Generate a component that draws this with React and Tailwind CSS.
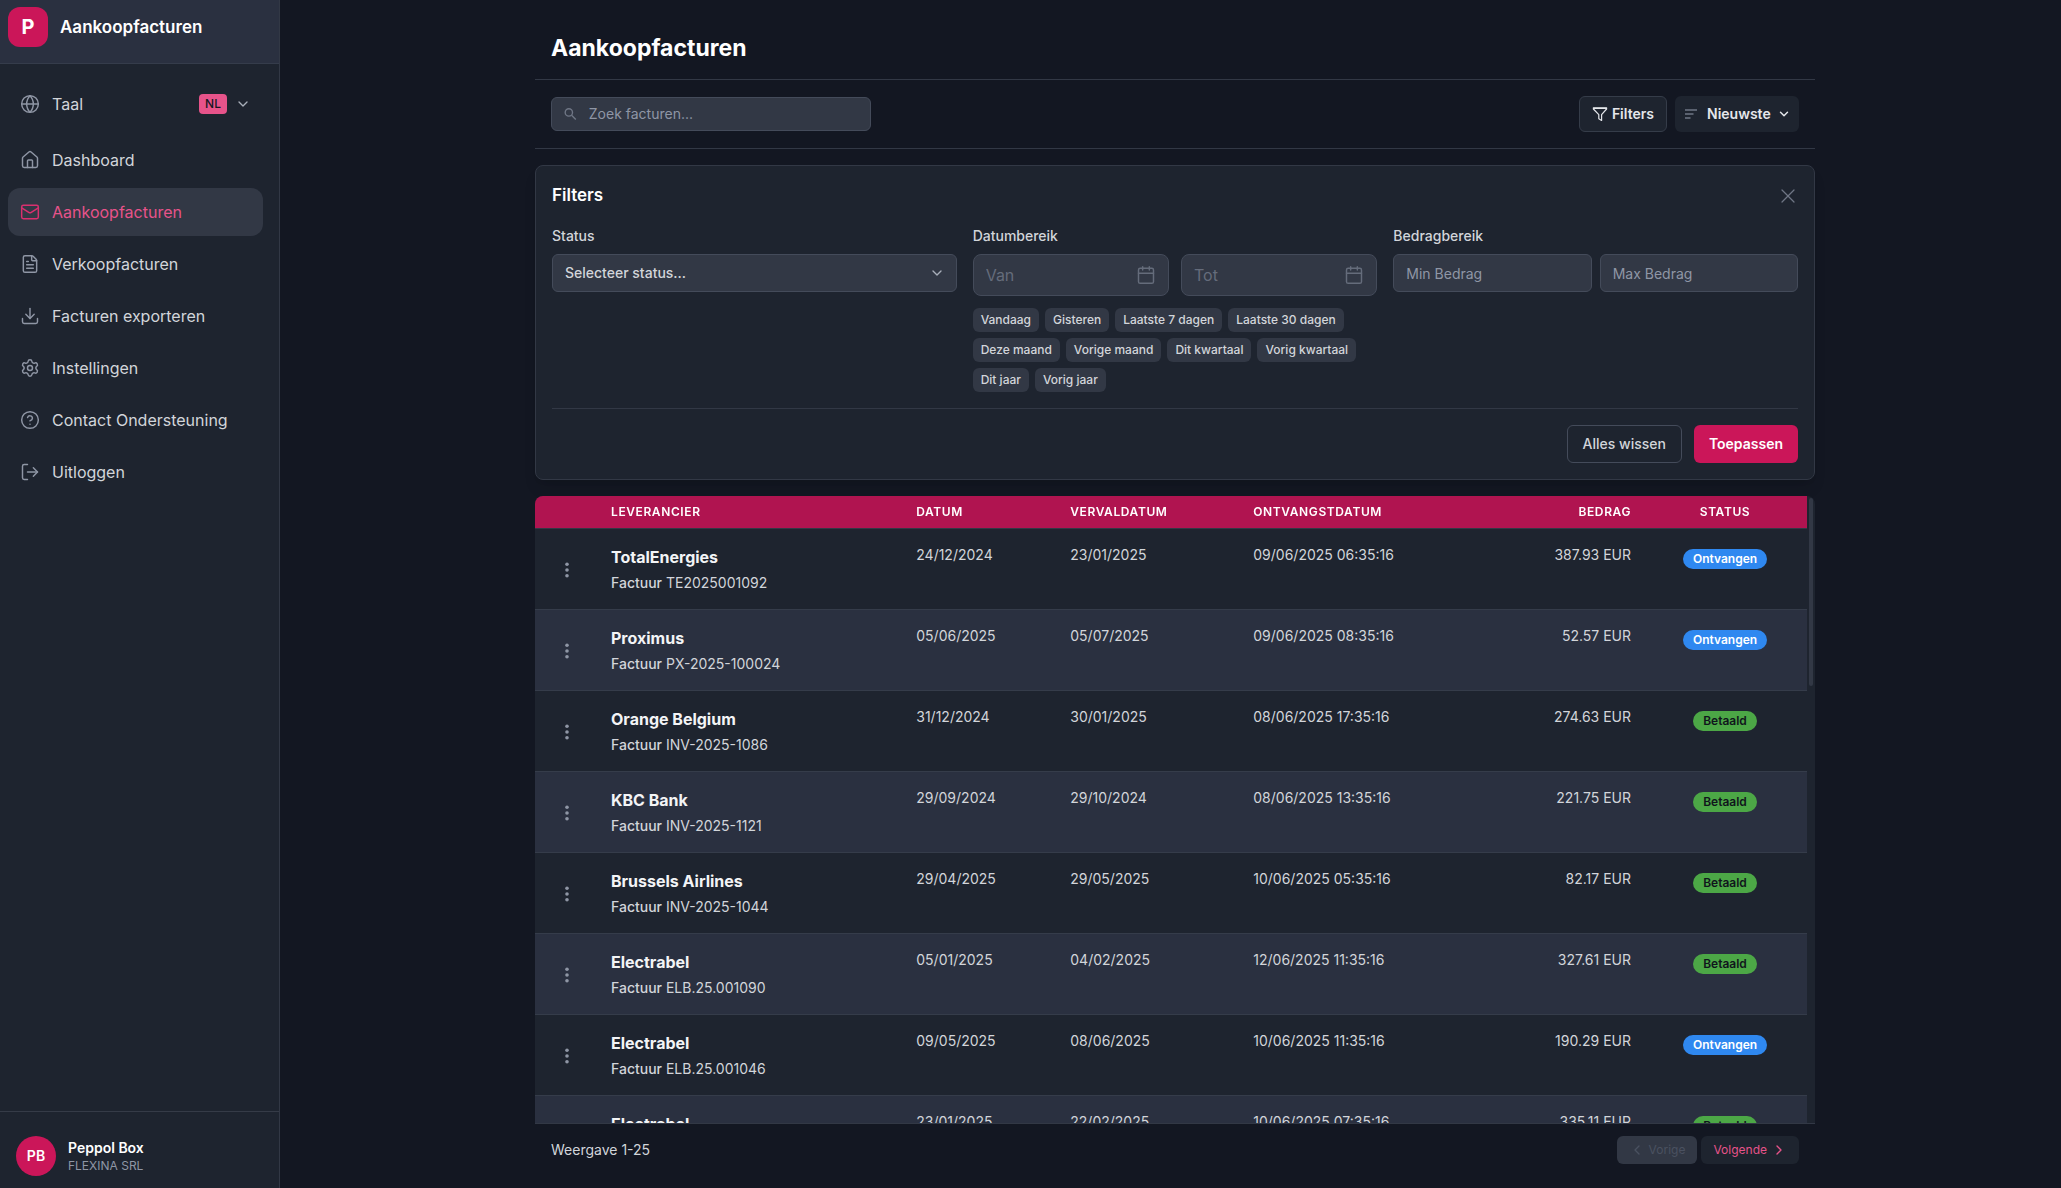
import { useState } from 'react';
import {
  Calendar,
  ChevronDown,
  ChevronLeft,
  ChevronRight,
  CircleHelp,
  Download,
  FileText,
  Globe,
  House,
  LogOut,
  Mail,
  Settings,
  X,
} from 'lucide-react';

const NAV_ITEMS = [
  { label: 'Dashboard', icon: House },
  { label: 'Aankoopfacturen', icon: Mail, active: true },
  { label: 'Verkoopfacturen', icon: FileText },
  { label: 'Facturen exporteren', icon: Download },
  { label: 'Instellingen', icon: Settings },
  { label: 'Contact Ondersteuning', icon: CircleHelp },
  { label: 'Uitloggen', icon: LogOut },
];

const PRESETS = [
  'Vandaag', 'Gisteren', 'Laatste 7 dagen', 'Laatste 30 dagen', 'Deze maand',
  'Vorige maand', 'Dit kwartaal', 'Vorig kwartaal', 'Dit jaar', 'Vorig jaar',
];

const INVOICES = [
  { supplier: 'TotalEnergies', number: 'TE2025001092', date: '24/12/2024', due: '23/01/2025', received: '09/06/2025 06:35:16', amount: '387.93 EUR', status: 'Ontvangen' },
  { supplier: 'Proximus', number: 'PX-2025-100024', date: '05/06/2025', due: '05/07/2025', received: '09/06/2025 08:35:16', amount: '52.57 EUR', status: 'Ontvangen' },
  { supplier: 'Orange Belgium', number: 'INV-2025-1086', date: '31/12/2024', due: '30/01/2025', received: '08/06/2025 17:35:16', amount: '274.63 EUR', status: 'Betaald' },
  { supplier: 'KBC Bank', number: 'INV-2025-1121', date: '29/09/2024', due: '29/10/2024', received: '08/06/2025 13:35:16', amount: '221.75 EUR', status: 'Betaald' },
  { supplier: 'Brussels Airlines', number: 'INV-2025-1044', date: '29/04/2025', due: '29/05/2025', received: '10/06/2025 05:35:16', amount: '82.17 EUR', status: 'Betaald' },
  { supplier: 'Electrabel', number: 'ELB.25.001090', date: '05/01/2025', due: '04/02/2025', received: '12/06/2025 11:35:16', amount: '327.61 EUR', status: 'Betaald' },
  { supplier: 'Electrabel', number: 'ELB.25.001046', date: '09/05/2025', due: '08/06/2025', received: '10/06/2025 11:35:16', amount: '190.29 EUR', status: 'Ontvangen' },
  { supplier: 'Electrabel', number: 'ELB.25.001013', date: '23/01/2025', due: '22/02/2025', received: '10/06/2025 07:35:16', amount: '335.11 EUR', status: 'Betaald' },
];

const STATUS_STYLES = {
  Ontvangen: 'bg-[#2f88f0] text-white',
  Betaald: 'bg-[#4ca746] text-[#10151c]',
};

function SearchIcon() {
  return (
    <svg width="14" height="14" viewBox="0 0 14 14" fill="none" stroke="currentColor" strokeWidth="1.5">
      <circle cx="5.3" cy="5.3" r="4" />
      <path d="M8.3 8.3l4.6 4.6" />
    </svg>
  );
}

function FunnelIcon() {
  return (
    <svg width="16" height="16" viewBox="0 0 16 16" fill="none" stroke="currentColor" strokeWidth="1.2" strokeLinejoin="round">
      <path d="M1.4 1.8h13.2v1.2L9.6 8.6v5.8L6.8 12.8V8.6L1.4 3z" />
      <path d="M1.4 2.4h13.2" />
    </svg>
  );
}

function SortIcon() {
  return (
    <svg width="12" height="10" viewBox="0 0 12 10" fill="none" stroke="currentColor" strokeWidth="1.6">
      <path d="M0 1h12M0 5h8.5M0 9h5.5" />
    </svg>
  );
}

function Sidebar() {
  return (
    <aside className="flex w-[280px] shrink-0 flex-col border-r border-[#323845] bg-[#1e242f]">
      <div className="flex h-16 shrink-0 items-start gap-3 border-b border-[#353c4b] bg-[#2a3040] px-2 pt-[7px]">
        <div className="flex size-10 items-center justify-center rounded-xl bg-[#cb1659] text-xl font-bold text-white">P</div>
        <span className="text-[17px] leading-10 font-semibold text-white">Aankoopfacturen</span>
      </div>

      <nav className="flex flex-1 flex-col gap-1 py-4 pr-4 pl-2">
        <button type="button" className="mb-1 flex h-12 items-center gap-3 rounded-xl px-3 text-left text-[#d2d5da]">
          <Globe size={20} strokeWidth={1.75} className="text-[#8f96a5]" />
          <span className="flex-1">Taal</span>
          <span className="flex items-center gap-2">
            <span className="flex h-5 w-7 items-center justify-center rounded-sm bg-[#e7538a] text-xs font-medium text-[#131722]">NL</span>
            <ChevronDown size={16} className="text-[#a9afba]" />
          </span>
        </button>
        {NAV_ITEMS.map(({ label, icon: Icon, active }) => (
          <a
            key={label}
            href="#"
            className={`flex h-12 items-center gap-3 rounded-xl px-3 ${active ? 'bg-[#323845] text-[#e7538a]' : 'text-[#d2d5da]'}`}
          >
            <Icon size={20} strokeWidth={1.75} className={active ? 'text-[#d9306f]' : 'text-[#8f96a5]'} />
            {label}
          </a>
        ))}
      </nav>

      <div className="flex items-center gap-3 border-t border-[#353b47] px-4 pt-6 pb-3">
        <div className="flex size-10 items-center justify-center rounded-full bg-[#cb1659] text-sm font-semibold text-white">PB</div>
        <div>
          <p className="text-sm font-semibold text-white">Peppol Box</p>
          <p className="text-xs text-[#8f96a5]">FLEXINA SRL</p>
        </div>
      </div>
    </aside>
  );
}

function Toolbar({ onToggleFilters }) {
  return (
    <div className="flex items-center justify-between border-b border-[#323845] px-4 py-4">
      <label className="flex h-[34px] w-80 items-center gap-3 rounded-md border border-[#444b5a] bg-[#323845] px-3 text-[#6f7685]">
        <SearchIcon />
        <input
          type="search"
          aria-label="Zoek facturen"
          placeholder="Zoek facturen..."
          className="w-full bg-transparent text-sm text-[#d2d5da] outline-none placeholder:text-[#8f96a5]"
        />
      </label>
      <div className="flex gap-2">
        <button
          type="button"
          onClick={onToggleFilters}
          className="flex h-9 items-center gap-1 rounded-md border border-[#353c49] bg-[#1e242f] px-3 text-sm font-semibold text-[#e5e7eb]"
        >
          <FunnelIcon />
          Filters
        </button>
        <div className="relative flex h-9 items-center text-[#e5e7eb]">
          <span className="pointer-events-none absolute left-2.5 text-[#6f7685]">
            <SortIcon />
          </span>
          <select aria-label="Sorteren" className="h-9 w-[124px] appearance-none rounded-md bg-[#1e242f] pl-8 text-sm font-semibold">
            <option>Nieuwste</option>
            <option>Oudste</option>
          </select>
          <ChevronDown size={14} strokeWidth={2.5} className="pointer-events-none absolute right-2" />
        </div>
      </div>
    </div>
  );
}

function DateField({ label }) {
  return (
    <label className="flex h-[42px] min-w-0 flex-1 items-center rounded-lg border border-[#444b5a] bg-[#323845] px-3 text-[#656c7b]">
      <input
        type="text"
        aria-label={label}
        placeholder={label}
        className="w-full min-w-0 bg-transparent text-base text-[#d2d5da] outline-none placeholder:text-[#656c7b]"
      />
      <Calendar size={20} strokeWidth={1.75} className="shrink-0" />
    </label>
  );
}

function FilterPanel({ onClose }) {
  return (
    <section className="mt-4 rounded-lg border border-[#323845] bg-[#1e242f] p-4 shadow-lg">
      <div className="mb-4 flex h-7 items-center justify-between">
        <h2 className="text-[17px] font-semibold text-white">Filters</h2>
        <button type="button" aria-label="Sluiten" onClick={onClose} className="-mr-0.5 text-[#6f7685]">
          <X size={24} strokeWidth={1.25} />
        </button>
      </div>

      <div className="grid grid-cols-3 gap-4 text-sm text-[#d2d5da]">
        <div>
          <label htmlFor="status" className="mb-2 block font-medium">Status</label>
          <div className="relative flex items-center">
            <select id="status" className="h-[38px] w-full appearance-none rounded-md border border-[#444b5a] bg-[#323845] px-3 font-medium">
              <option>Selecteer status...</option>
              <option>Ontvangen</option>
              <option>Betaald</option>
            </select>
            <ChevronDown size={16} className="pointer-events-none absolute right-3 text-[#a9afba]" />
          </div>
        </div>

        <fieldset className="min-w-0">
          <legend className="mb-2 font-medium">Datumbereik</legend>
          <div className="flex gap-3">
            <DateField label="Van" />
            <DateField label="Tot" />
          </div>
          <div className="mt-3 flex flex-wrap gap-1.5">
            {PRESETS.map(preset => (
              <button key={preset} type="button" className="h-6 rounded-md bg-[#323845] px-2 text-xs font-medium">
                {preset}
              </button>
            ))}
          </div>
        </fieldset>

        <fieldset className="min-w-0">
          <legend className="mb-2 font-medium">Bedragbereik</legend>
          <div className="flex gap-2">
            {['Min Bedrag', 'Max Bedrag'].map(label => (
              <input
                key={label}
                type="text"
                aria-label={label}
                placeholder={label}
                className="h-[38px] min-w-0 flex-1 rounded-md border border-[#444b5a] bg-[#323845] px-3 placeholder:text-[#8f96a5]"
              />
            ))}
          </div>
        </fieldset>
      </div>

      <div className="mt-4 flex justify-end gap-3 border-t border-[#323845] pt-4 text-sm">
        <button type="button" className="h-[38px] rounded-md border border-[#444b5a] px-[15px] font-medium text-[#d2d5da]">
          Alles wissen
        </button>
        <button type="button" className="h-[38px] rounded-md bg-[#cb1659] px-[15px] font-semibold text-white">
          Toepassen
        </button>
      </div>
    </section>
  );
}

function InvoiceTable() {
  return (
    <div className="relative mt-4 min-h-0 flex-1 overflow-hidden rounded-t-lg border-b border-[#323845] bg-[#1e242f] pr-2">
      <div className="h-full overflow-y-auto [scrollbar-width:none]">
        <table className="w-full table-fixed text-left text-sm text-[#d2d5da]">
          <colgroup>
            <col className="w-16" />
            <col className="w-[24%]" />
            <col className="w-[154px]" />
            <col className="w-[183px]" />
            <col className="w-[261px]" />
            <col />
            <col className="w-[164px]" />
          </colgroup>
          <thead className="sticky top-0 z-10 bg-[#b01450] text-xs tracking-wider text-white uppercase">
            <tr className="h-8 border-b border-[#323845]">
              <th aria-label="Acties" />
              <th className="px-3 font-semibold">Leverancier</th>
              <th className="px-3 font-semibold">Datum</th>
              <th className="px-3 font-semibold">Vervaldatum</th>
              <th className="px-3 font-semibold">Ontvangstdatum</th>
              <th className="px-3 text-right font-semibold">Bedrag</th>
              <th className="px-3 text-center font-semibold">Status</th>
            </tr>
          </thead>
          <tbody>
            {INVOICES.map(invoice => (
              <tr key={invoice.number} className="border-b border-[#353c4a] align-top even:bg-[#2a3040]">
                <td className="text-center align-middle">
                  <button type="button" aria-label="Acties" className="align-middle text-[#8f96a5]">
                    <svg width="16" height="16" viewBox="0 0 16 16" fill="currentColor">
                      <circle cx="8" cy="2.2" r="1.8" />
                      <circle cx="8" cy="8" r="1.8" />
                      <circle cx="8" cy="13.8" r="1.8" />
                    </svg>
                  </button>
                </td>
                <td className="px-3 py-4">
                  <p className="text-base font-bold text-[#f3f4f6]">{invoice.supplier}</p>
                  <p className="mt-1"><span className="font-medium">Factuur</span> {invoice.number}</p>
                </td>
                <td className="px-3 py-4">{invoice.date}</td>
                <td className="px-3 py-4">{invoice.due}</td>
                <td className="px-3 py-4">{invoice.received}</td>
                <td className="px-3 py-4 text-right">{invoice.amount}</td>
                <td className="px-3 py-5 text-center">
                  <span className={`inline-block h-5 rounded-full px-2.5 align-top text-xs leading-5 font-semibold ${STATUS_STYLES[invoice.status]}`}>
                    {invoice.status}
                  </span>
                </td>
              </tr>
            ))}
          </tbody>
        </table>
      </div>
      <div className="absolute top-0.5 right-0.5 h-[30%] w-1 rounded-full bg-[#323845]" />
    </div>
  );
}

export default function App() {
  const [showFilters, setShowFilters] = useState(true);

  return (
    <div className="flex h-screen overflow-hidden bg-[#131722] font-[Inter,sans-serif]">
      <Sidebar />
      <main className="min-w-0 flex-1 pl-[9px]">
        <div className="mx-auto flex h-full max-w-7xl flex-col pb-3">
          <h1 className="border-b border-[#323845] px-4 pt-8 pb-[15px] text-[23px] leading-8 font-bold text-white">Aankoopfacturen</h1>
          <Toolbar onToggleFilters={() => setShowFilters(!showFilters)} />
          {showFilters && <FilterPanel onClose={() => setShowFilters(false)} />}
          <InvoiceTable />
          <footer className="flex items-center justify-between px-4 py-3">
            <p className="text-sm text-[#d2d5da]">Weergave 1-25</p>
            <div className="flex gap-1 text-xs">
              <button type="button" disabled className="flex h-7 items-center gap-1 rounded-md bg-[#323845] px-3 text-[#4a5160]">
                <ChevronLeft size={16} />
                Vorige
              </button>
              <button type="button" className="flex h-7 items-center gap-1 rounded-md bg-[#1e242f] px-3 text-[#e7538a]">
                Volgende
                <ChevronRight size={16} />
              </button>
            </div>
          </footer>
        </div>
      </main>
    </div>
  );
}
